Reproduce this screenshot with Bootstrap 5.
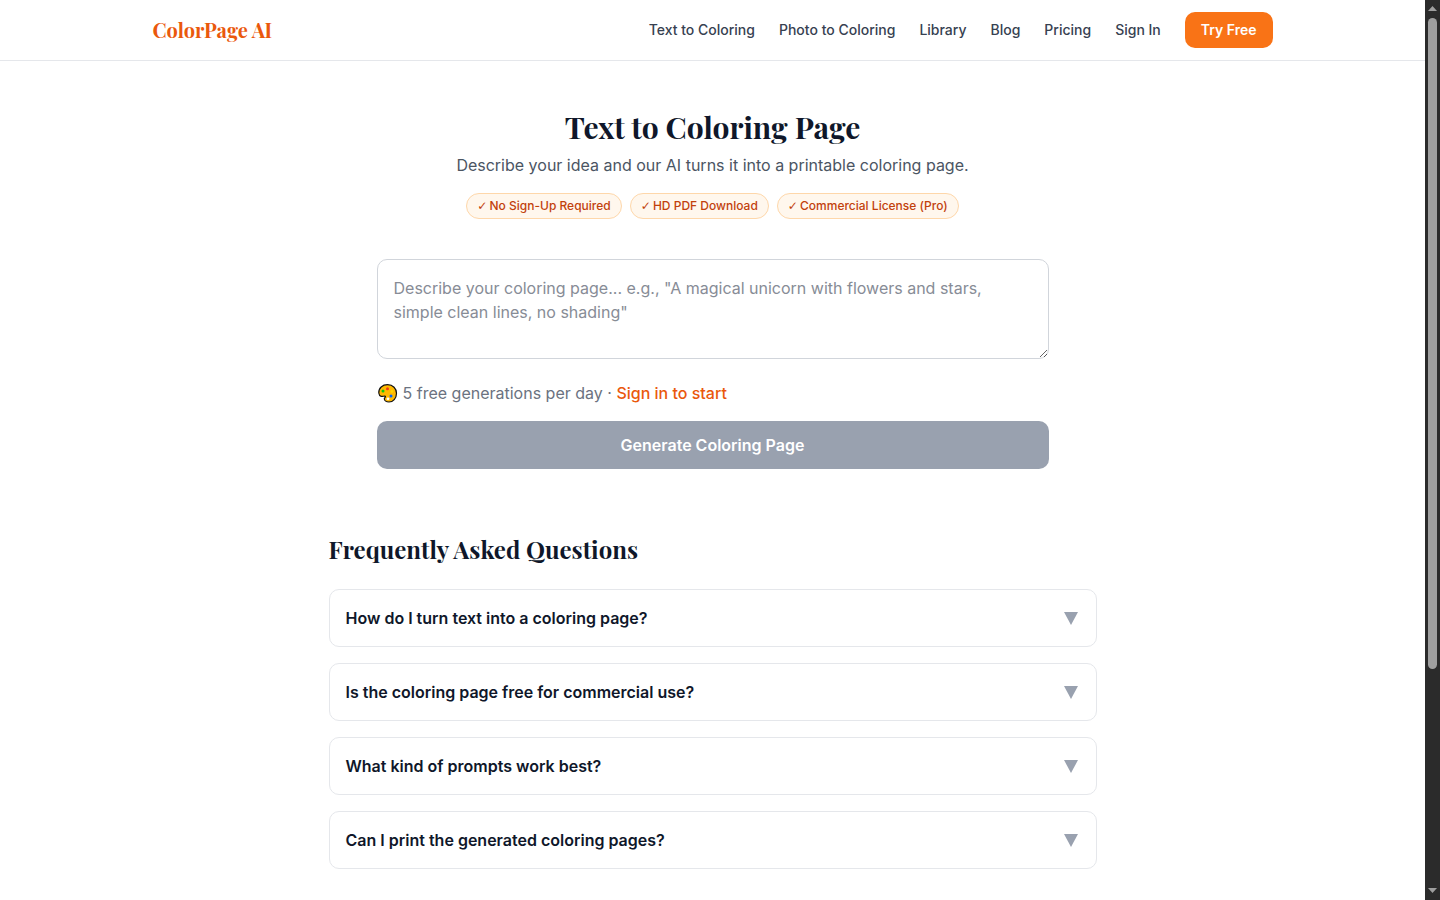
<!DOCTYPE html>
<html lang="en">
<head>
<meta charset="utf-8">
<meta name="viewport" content="width=device-width, initial-scale=1">
<title>Text to Coloring Page - ColorPage AI</title>
<link href="https://cdn.jsdelivr.net/npm/bootstrap@5.3.0/dist/css/bootstrap.min.css" rel="stylesheet">
<style>
  :root { --ink: #0f172a; --slate: #374151; --orange: #ea580c; --line: #e5e7eb; }
  body { font-family: Inter, "Liberation Sans", sans-serif; font-size: 16px; line-height: 24px; color: var(--ink); background: #fff; padding-right: 15px; }
  .display-serif { font-family: "Playfair Display", "Liberation Serif", serif; font-weight: 700; color: var(--ink); }
  .site-header { border-bottom: 1px solid var(--line); }
  .wrap-nav { max-width: 1152px; padding: 12px 16px; }
  .wrap-form { max-width: 704px; }
  .wrap-faq { max-width: 800px; }
  .site-brand { font-size: 20px; line-height: 28px; color: var(--orange); }
  .site-links { font-size: 14px; line-height: 20px; font-weight: 500; gap: 24px; }
  .site-links .nav-link { color: var(--slate); }
  .btn-try { background: #f97316; color: #fff; font-size: 14px; line-height: 20px; font-weight: 600; border: 0; border-radius: 10px; padding: 8px 16px; }
  .btn-try:hover { background: var(--orange); color: #fff; }
  h1 { font-size: 30px; line-height: 36px; }
  h2 { font-size: 24px; line-height: 32px; }
  .lead-copy { color: #4b5563; }
  .pill { background: #fff7ed; border: 1px solid #fed7aa; color: #c2410c; font-size: 12px; line-height: 16px; font-weight: 500; padding: 4px 10px; border-radius: 13px; }
  .tick { display: inline-block; width: 9px; font-family: "DejaVu Sans", sans-serif; font-size: 12px; line-height: 12px; font-weight: 400; }
  .form-area { padding-top: 40px; }
  .prompt-box { height: 100px; padding: 16px; font-size: 16px; line-height: 24px; border: 1px solid #d1d5db; border-radius: 10px; resize: vertical; }
  .prompt-box::placeholder { color: #878c96; }
  .quota { color: #6b7280; margin-top: 22px; }
  .quota a { color: var(--orange); font-weight: 500; }
  .btn-generate, .btn-generate:disabled { background: #99a1af; color: #fff; font-weight: 600; line-height: 24px; padding: 12px; border: 0; border-radius: 10px; opacity: 1; }
  .faq-area { padding-top: 64px; padding-bottom: 31px; }
  .faq-item { background: #fff; border: 1px solid var(--line); border-radius: 10px; padding: 16px; font-weight: 600; color: var(--ink); }
  .scroll-rail { width: 15px; background: #2b2b2b; }
  .scroll-thumb { width: 9px; height: 72.3%; background: #9f9f9f; border-radius: 5px; }
</style>
</head>
<body>
<header class="site-header">
  <nav class="wrap-nav mx-auto d-flex flex-wrap justify-content-between align-items-center">
    <a href="#" class="site-brand display-serif text-decoration-none">ColorPage AI</a>
    <div class="site-links d-flex flex-wrap align-items-center">
      <a class="nav-link" href="#">Text to Coloring</a>
      <a class="nav-link" href="#">Photo to Coloring</a>
      <a class="nav-link" href="#">Library</a>
      <a class="nav-link" href="#">Blog</a>
      <a class="nav-link" href="#">Pricing</a>
      <a class="nav-link" href="#">Sign In</a>
      <a class="btn btn-try" href="#">Try Free</a>
    </div>
  </nav>
</header>

<main class="pt-5">
  <section class="wrap-form mx-auto px-3">
    <div class="text-center">
      <h1 class="display-serif mb-2">Text to Coloring Page</h1>
      <p class="lead-copy mb-3">Describe your idea and our AI turns it into a printable coloring page.</p>
      <div class="d-flex flex-wrap justify-content-center gap-2">
        <span class="pill"><span class="tick">✓</span> No Sign-Up Required</span>
        <span class="pill"><span class="tick">✓</span> HD PDF Download</span>
        <span class="pill"><span class="tick">✓</span> Commercial License (Pro)</span>
      </div>
    </div>
    <form class="form-area">
      <textarea class="form-control prompt-box" aria-label="Coloring page description" placeholder="Describe your coloring page... e.g., &quot;A magical unicorn with flowers and stars, simple clean lines, no shading&quot;"></textarea>
      <p class="quota d-flex align-items-center mb-3">
        <svg class="me-1" width="22" height="22" viewBox="0 0 22 22" aria-hidden="true">
          <path d="M1.800 11C1.500 6 5.500 2.700 10.500 2.700C16 2.700 19.500 6.500 19.500 11.300C19.500 16.500 16 20 12 20C9.300 20 7.300 18.500 7.300 16.800C7.300 15.800 8.900 15.300 8.400 14.300C7.500 13.700 6 14.600 4.200 14.400C2.800 14 2 12.800 1.800 11Z" fill="#ffb900" stroke="#111" stroke-width="1.200"/>
          <circle cx="6" cy="9" r="1.500" fill="#16c60c"/>
          <circle cx="10.500" cy="6.700" r="1.500" fill="#f03a17"/>
          <circle cx="15" cy="9.500" r="1.400" fill="#ffd500"/>
          <circle cx="14" cy="14" r="1.500" fill="#0063ff"/>
          <circle cx="11" cy="16.800" r="1.400" fill="#fff"/>
        </svg>
        <span>5 free generations per day · <a class="text-decoration-none" href="#">Sign in to start</a></span>
      </p>
      <button type="button" class="btn btn-generate w-100" disabled>Generate Coloring Page</button>
    </form>
  </section>

  <section class="wrap-faq mx-auto px-3 faq-area">
    <h2 class="display-serif mb-4">Frequently Asked Questions</h2>
    <div class="d-grid gap-3">
      <button type="button" class="faq-item d-flex justify-content-between align-items-center text-start" aria-expanded="false">How do I turn text into a coloring page?<svg width="18" height="14" viewBox="0 0 18 14" aria-hidden="true"><path d="M2 1h14L9 14z" fill="#99a1af"/></svg></button>
      <button type="button" class="faq-item d-flex justify-content-between align-items-center text-start" aria-expanded="false">Is the coloring page free for commercial use?<svg width="18" height="14" viewBox="0 0 18 14" aria-hidden="true"><path d="M2 1h14L9 14z" fill="#99a1af"/></svg></button>
      <button type="button" class="faq-item d-flex justify-content-between align-items-center text-start" aria-expanded="false">What kind of prompts work best?<svg width="18" height="14" viewBox="0 0 18 14" aria-hidden="true"><path d="M2 1h14L9 14z" fill="#99a1af"/></svg></button>
      <button type="button" class="faq-item d-flex justify-content-between align-items-center text-start" aria-expanded="false">Can I print the generated coloring pages?<svg width="18" height="14" viewBox="0 0 18 14" aria-hidden="true"><path d="M2 1h14L9 14z" fill="#99a1af"/></svg></button>
    </div>
  </section>
</main>

<div class="scroll-rail position-fixed top-0 end-0 vh-100 d-flex flex-column align-items-center" aria-hidden="true">
  <svg width="15" height="18" viewBox="0 0 15 18"><path d="M3 11h9L7.500 6z" fill="#9f9f9f"/></svg>
  <div class="scroll-thumb"></div>
  <svg class="mt-auto" width="15" height="18" viewBox="0 0 15 18"><path d="M3 6h9L7.500 11z" fill="#9f9f9f"/></svg>
</div>
<script src="https://cdn.jsdelivr.net/npm/bootstrap@5.3.0/dist/js/bootstrap.bundle.min.js"></script>
</body>
</html>
